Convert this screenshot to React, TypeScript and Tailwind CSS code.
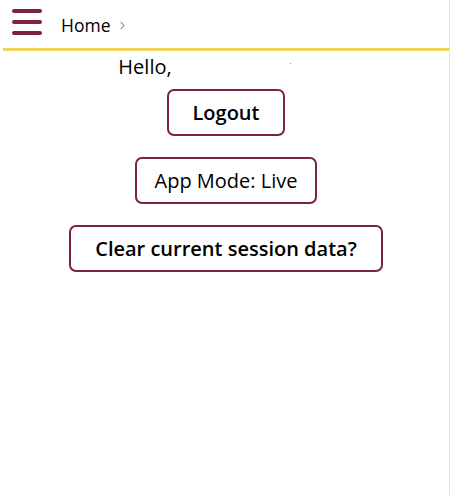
import { ChevronRight } from 'lucide-react';

const maroon = 'border-[#7a2342]';

function Hamburger() {
  return (
    <button className="flex flex-col gap-[7.5px] w-[30px]" aria-label="Menu">
      <span className="block h-[3.5px] w-full rounded-full bg-[#7a2342]" />
      <span className="block h-[3.5px] w-full rounded-full bg-[#7a2342]" />
      <span className="block h-[3.5px] w-full rounded-full bg-[#7a2342]" />
    </button>
  );
}

export default function App() {
  return (
    <div className="h-[497px] w-[455px] bg-white font-['Open_Sans',sans-serif] text-black">
      <div className="h-[495px] w-[450px] pl-[3px] border-r border-[#dde3f6] flex flex-col">
        <header className="h-[51px] flex items-start border-b-[3px] border-[#f0d35a]">
          <div className="pl-[9px] pt-[9px]">
            <Hamburger />
          </div>
          <nav className="flex items-center ml-[19px] mt-[12px]">
            <span className="text-[17.5px] leading-[26px]">Home</span>
            <ChevronRight className="ml-[6px] text-gray-400" size={13} strokeWidth={2} />
          </nav>
        </header>

        <main className="flex flex-col items-center">
          <div className="mt-[2px] text-[20px] leading-[28px] flex items-start -ml-[2px]">
            <span>Hello,</span>
            <span className="inline-block w-[160px] relative">
              <span className="absolute left-[118px] top-[10px] w-[1px] h-[1px] bg-[#e08a4a]" />
            </span>
          </div>

          <button className={`mt-[8px] h-[47px] px-[24px] rounded-[7px] border-2 ${maroon} text-[20px] font-semibold`}>
            Logout
          </button>
          <button className={`mt-[21px] h-[47px] px-[18px] rounded-[7px] border-2 ${maroon} text-[20px]`}>
            App Mode: Live
          </button>
          <button className={`mt-[21px] h-[47px] px-[24px] rounded-[7px] border-2 ${maroon} text-[20px] font-semibold`}>
            Clear current session data?
          </button>
        </main>
      </div>
    </div>
  );
}
